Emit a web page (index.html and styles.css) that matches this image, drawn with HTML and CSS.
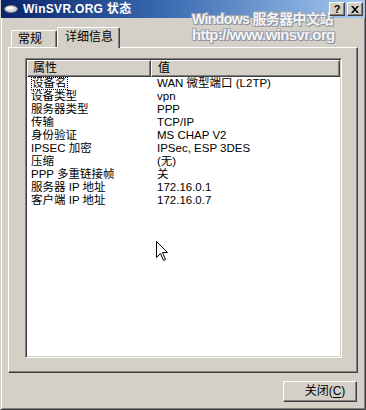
FILE: index.html
```html
<!DOCTYPE html>
<html lang="zh-CN">
<head>
    <meta charset="UTF-8">
    <title>WinSVR.ORG 状态</title>
    <link rel="stylesheet" href="styles.css">
</head>
<body>
    <div class="window">
        <div class="titlebar">
            <svg class="title-icon" viewBox="0 0 14 10" width="14" height="10">
                <ellipse cx="7" cy="5" rx="6.5" ry="3.5" fill="#d8d8d8" stroke="#7a7a7a" stroke-width="1"/>
                <ellipse cx="6" cy="4" rx="3.5" ry="1.5" fill="#ffffff"/>
            </svg>
            <span class="title-text">WinSVR.ORG 状态</span>
            <div class="title-btns">
                <div class="cap-btn help">?</div>
                <div class="cap-btn close">
                    <svg viewBox="0 0 8 7" width="8" height="7">
                        <path d="M0 0h2l2 2.2L6 0h2L5 3.5 8 7H6L4 4.8 2 7H0l3-3.5z" fill="#000"/>
                    </svg>
                </div>
            </div>
        </div>

        <div class="content">
            <div class="tabs">
                <div class="tab">常规</div>
                <div class="tab active">详细信息</div>
            </div>
            <div class="panel">
                <div class="listview">
                    <div class="lv-head">
                        <div class="col-h c1">属性</div>
                        <div class="col-h c2">值</div>
                    </div>
                    <div class="lv-row"><span class="c1"><span class="focus">设备名</span></span><span class="c2">WAN 微型端口 (L2TP)</span></div>
                    <div class="lv-row"><span class="c1">设备类型</span><span class="c2">vpn</span></div>
                    <div class="lv-row"><span class="c1">服务器类型</span><span class="c2">PPP</span></div>
                    <div class="lv-row"><span class="c1">传输</span><span class="c2">TCP/IP</span></div>
                    <div class="lv-row"><span class="c1">身份验证</span><span class="c2">MS CHAP V2</span></div>
                    <div class="lv-row"><span class="c1">IPSEC 加密</span><span class="c2">IPSec, ESP 3DES</span></div>
                    <div class="lv-row"><span class="c1">压缩</span><span class="c2">(无)</span></div>
                    <div class="lv-row"><span class="c1">PPP 多重链接帧</span><span class="c2">关</span></div>
                    <div class="lv-row"><span class="c1">服务器 IP 地址</span><span class="c2">172.16.0.1</span></div>
                    <div class="lv-row"><span class="c1">客户端 IP 地址</span><span class="c2">172.16.0.7</span></div>
                </div>
            </div>
            <div class="footer">
                <div class="btn">关闭(<u>C</u>)</div>
            </div>
        </div>

        <div class="watermark">
            <div class="wm-line1">Windows 服务器中文站</div>
            <div class="wm-line2">http://www.winsvr.org</div>
        </div>

        <svg class="cursor" viewBox="0 0 12 20" width="12" height="20">
            <path d="M0.5 0.5V16.5L4.5 12.5L7.5 19.5L9.5 18.5L6.5 11.5H11.5Z" fill="#fff" stroke="#000" stroke-width="1"/>
        </svg>
    </div>
</body>
</html>
```

FILE: styles.css
```css
* {
    box-sizing: border-box;
    margin: 0;
    padding: 0;
}

body {
    width: 366px;
    height: 410px;
    overflow: hidden;
    background: #d4d0c8;
    font-family: "Liberation Sans", "Noto Sans CJK SC", sans-serif;
    font-size: 12px;
    line-height: 13px;
    color: #000;
}

.window {
    position: relative;
    width: 366px;
    height: 410px;
    display: flex;
    flex-direction: column;
    border-left: 1px solid #d4d0c8;
    border-right: 1px solid #404040;
    border-bottom: 1px solid #404040;
    box-shadow: inset 1px 0 0 #fff, inset -1px 0 0 #808080, inset 0 -1px 0 #808080;
}

.titlebar {
    height: 18px;
    display: flex;
    align-items: center;
    padding-left: 3px;
    background: linear-gradient(to right, #0a246a 0%, #3a6ab0 45%, #a6caf0 100%);
    color: #fff;
}

.title-icon {
    margin-right: 5px;
}

.title-text {
    font-weight: bold;
    font-size: 12px;
    letter-spacing: 0.3px;
}

.title-btns {
    margin-left: auto;
    margin-right: 2px;
    display: flex;
    gap: 2px;
    position: relative;
    z-index: 2;
}

.cap-btn {
    width: 16px;
    height: 14px;
    background: #d4d0c8;
    border-top: 1px solid #fff;
    border-left: 1px solid #fff;
    border-right: 1px solid #404040;
    border-bottom: 1px solid #404040;
    box-shadow: inset -1px -1px 0 #808080;
    display: flex;
    align-items: center;
    justify-content: center;
    color: #000;
    font-family: "Liberation Sans", sans-serif;
    font-weight: bold;
    font-size: 11px;
    line-height: 11px;
}

.content {
    flex: 1;
    display: flex;
    flex-direction: column;
    padding: 9px 7px 0 7px;
}

.tabs {
    display: flex;
    align-items: flex-end;
    height: 20px;
    padding-left: 3px;
    position: relative;
    z-index: 1;
}

.tab {
    height: 17px;
    width: 46px;
    padding-left: 6px;
    padding-top: 2px;
    border-top: 1px solid #fff;
    border-left: 1px solid #fff;
    border-right: 1px solid #404040;
    box-shadow: inset -1px 0 0 #808080;
    border-radius: 2px 2px 0 0;
    background: #d4d0c8;
}

.tab.active {
    height: 21px;
    width: 63px;
    margin-bottom: -1px;
    padding-left: 7px;
    padding-top: 3px;
}

.panel {
    width: 350px;
    height: 326px;
    border-top: 1px solid #fff;
    border-left: 1px solid #fff;
    border-right: 1px solid #404040;
    border-bottom: 1px solid #404040;
    box-shadow: inset -1px -1px 0 #808080;
    padding: 10px 0 0 16px;
}

.listview {
    width: 317px;
    height: 300px;
    background: #fff;
    border-top: 1px solid #808080;
    border-left: 1px solid #808080;
    border-right: 1px solid #fff;
    border-bottom: 1px solid #fff;
    box-shadow: inset 1px 1px 0 #404040, inset -1px -1px 0 #d4d0c8;
    padding: 1px;
}

.lv-head {
    display: flex;
    height: 17px;
}

.col-h {
    background: #d4d0c8;
    border-top: 1px solid #fff;
    border-left: 1px solid #fff;
    border-right: 1px solid #404040;
    border-bottom: 1px solid #404040;
    box-shadow: inset -1px -1px 0 #808080;
    padding: 1px 0 0 5px;
}

.col-h.c1 {
    width: 124px;
}

.col-h.c2 {
    flex: 1;
    padding-left: 6px;
}

.lv-row {
    display: flex;
    height: 13px;
    white-space: nowrap;
    font-size: 11.5px;
}

.lv-row .c1 {
    width: 124px;
    padding-left: 4px;
}

.lv-row .c2 {
    padding-left: 6px;
}

.focus {
    display: inline-block;
    height: 13px;
    padding: 0 1px;
    outline: 1px dotted #000;
    outline-offset: -1px;
}

.footer {
    display: flex;
    justify-content: flex-end;
    padding-top: 8px;
    padding-right: 1px;
}

.btn {
    width: 74px;
    height: 21px;
    background: #d4d0c8;
    border-top: 1px solid #fff;
    border-left: 1px solid #fff;
    border-right: 1px solid #404040;
    border-bottom: 1px solid #404040;
    box-shadow: inset -1px -1px 0 #808080;
    display: flex;
    align-items: center;
    justify-content: center;
    padding-left: 10px;
}

.btn u {
    text-decoration: none;
    border-bottom: 1px solid #000;
    line-height: 11px;
}

.watermark {
    position: absolute;
    left: 191px;
    top: 11px;
    color: #f2f4f8;
    font-family: "Liberation Sans", "Noto Sans CJK SC", sans-serif;
    font-weight: bold;
    text-shadow: 1px 1px 0 #8a8f98, -1px -1px 0 #a4a8b0, 1px -1px 0 #a4a8b0, -1px 1px 0 #a4a8b0;
    pointer-events: none;
}

.wm-line1 {
    font-size: 14px;
    line-height: 16px;
    letter-spacing: -0.6px;
}

.wm-line2 {
    font-size: 15px;
    line-height: 16px;
    letter-spacing: -0.6px;
}

.cursor {
    position: absolute;
    left: 155px;
    top: 241px;
}
```
